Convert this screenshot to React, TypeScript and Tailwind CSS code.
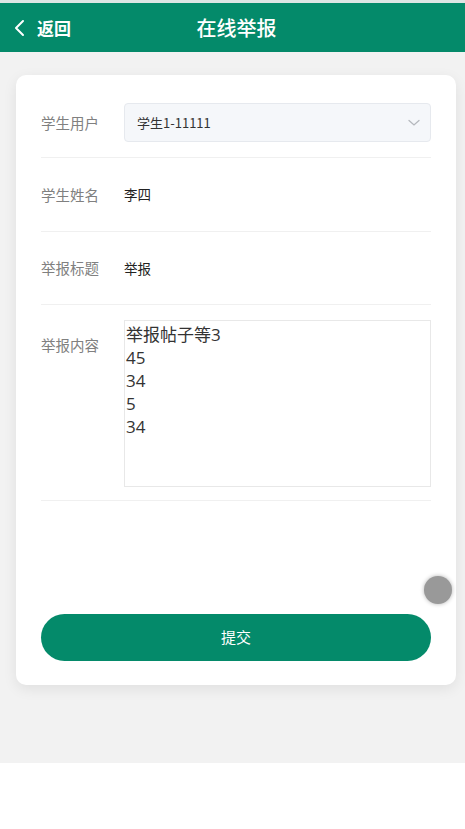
import React from "react";

const font = { fontFamily: '"Noto Sans CJK SC", "Noto Sans", sans-serif' };

function Row({ label, children }: { label: string; children: React.ReactNode }) {
  return (
    <div className="flex border-b border-[#f0f0f0] items-center">
      <div className="w-[83px] shrink-0 text-[14.5px] text-[#808080]">{label}</div>
      <div className="flex-1 min-w-0">{children}</div>
    </div>
  );
}

export default function App() {
  return (
    <div className="w-[465px] h-[829px] bg-white" style={font}>
      <div className="h-[3px] bg-[#dde6e4]" />
      <div className="relative h-[49px] bg-[#048a6a] flex items-center text-white">
        <div className="flex items-center pl-[14px] gap-[12px]">
          <svg width="11" height="18" viewBox="0 0 11 18" fill="none">
            <path d="M9 2 L2 9 L9 16" stroke="white" strokeWidth="2" strokeLinecap="round" strokeLinejoin="round" />
          </svg>
          <span className="text-[17px] font-bold">返回</span>
        </div>
        <div className="absolute left-0 right-0 top-0 bottom-0 flex items-center justify-center pointer-events-none">
          <span className="text-[20px] font-medium ml-[8px]">在线举报</span>
        </div>
      </div>
      <div className="bg-[#f2f2f2] h-[711px] pt-[23px] px-[16px] pr-[9px]">
        <div className="relative bg-white rounded-[10px] shadow-[0_4px_14px_rgba(0,0,0,0.08)] px-[25px] pb-[24px] pt-[28px] h-[610px] flex flex-col">
          <div className="pb-[15px] border-b border-[#f0f0f0] flex items-center">
            <div className="w-[83px] shrink-0 text-[14.5px] text-[#808080]">学生用户</div>
            <div className="flex-1 h-[39px] bg-[#f5f7fa] border border-[#e6e9ee] rounded-[4px] flex items-center justify-between pl-[12px] pr-[10px]">
              <span className="text-[13px] text-[#333]">学生1-11111</span>
              <svg width="12" height="8" viewBox="0 0 12 8" fill="none">
                <path d="M1 1.5 L6 6 L11 1.5" stroke="#b5b8bd" strokeWidth="1.3" strokeLinecap="round" />
              </svg>
            </div>
          </div>
          <div className="h-[74px]">
            <Row label="学生姓名">
              <div className="h-[73px] flex items-center text-[13.5px] text-[#222]">李四</div>
            </Row>
          </div>
          <div className="h-[73px]">
            <Row label="举报标题">
              <div className="h-[72px] flex items-center text-[13.5px] text-[#222]">举报</div>
            </Row>
          </div>
          <div className="pt-[15px] pb-[13px] border-b border-[#f0f0f0] flex items-start">
            <div className="w-[83px] shrink-0 text-[14.5px] text-[#808080] pt-[14px]">举报内容</div>
            <div className="flex-1 h-[167px] border border-[#e8e8e8] pl-[1px] pt-[2px] text-[17px] leading-[23px] text-[#333]" style={{ fontFamily: '"Open Sans", "Noto Sans CJK SC", sans-serif' }}>
              <div>举报帖子等3</div>
              <div>45</div>
              <div>34</div>
              <div>5</div>
              <div>34</div>
            </div>
          </div>
          <div className="flex-1" />
          <div className="h-[47px] rounded-full bg-[#048a6a] flex items-center justify-center text-white text-[15px]">提交</div>
          <div className="absolute right-[4px] top-[501px] w-[28px] h-[28px] rounded-full bg-[#999] shadow-[0_0_4px_rgba(0,0,0,0.3)]" />
        </div>
      </div>
    </div>
  );
}
